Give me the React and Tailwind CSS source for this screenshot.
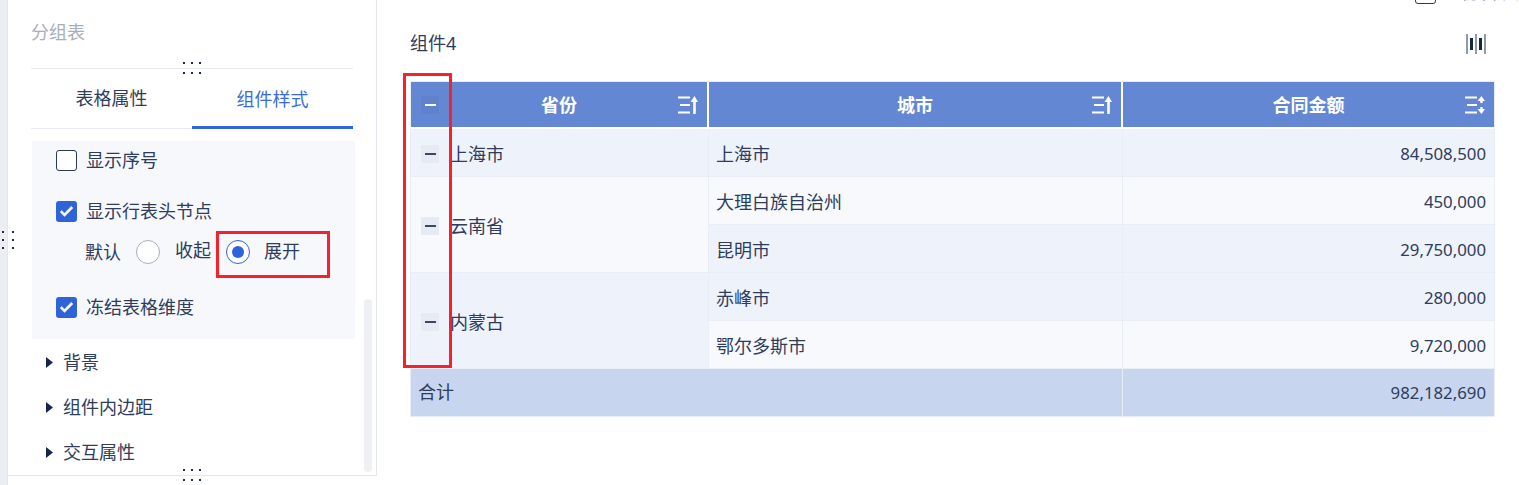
const font = { fontFamily: '"Noto Sans", "Noto Sans CJK SC", sans-serif' };

function Dots({ className }) {
  return (
    <div className={`absolute grid grid-cols-3 gap-x-[6px] gap-y-[8px] ${className}`}>
      {[0, 1, 2, 3, 4, 5].map((i) => (
        <span key={i} className="w-[2px] h-[2px] bg-[#1e2d4d]"></span>
      ))}
    </div>
  );
}

function Check({ checked, label }) {
  return (
    <div className="flex items-center gap-[9px] h-[20px] text-[18px] leading-[20px] text-[#2e3d5c]">
      {checked ? (
        <span className="w-[21px] h-[21px] rounded-[3px] bg-[#2f63d9] flex items-center justify-center">
          <svg width="15" height="12" viewBox="0 0 15 12" fill="none">
            <path d="M1.8 6.2 L5.6 10 L13.2 2" stroke="#fff" strokeWidth="2.6" />
          </svg>
        </span>
      ) : (
        <span className="w-[21px] h-[21px] rounded-[3px] border border-[#2b3a58] bg-white"></span>
      )}
      <span>{label}</span>
    </div>
  );
}

function Section({ label }) {
  return (
    <div className="flex items-center h-[45px] text-[18px] text-[#2e3d5c]">
      <svg width="7" height="11" viewBox="0 0 7 11" className="mr-[10px]">
        <path d="M0 0 L7 5.5 L0 11 Z" fill="#14264a" />
      </svg>
      <span>{label}</span>
    </div>
  );
}

function SortIcon({ both }) {
  return (
    <svg width="20" height="20" viewBox="0 0 20 20" fill="none" stroke="#fff" strokeWidth="2">
      <path d="M0 2.5 H12 M2 10 H12 M0 17.5 H12" />
      {both ? (
        <>
          <path d="M16.5 3 V8 M16.5 12 V17" strokeWidth="2.4" />
          <path d="M12.5 6 L16.5 1 L20 6 Z M12.5 14 L16.5 19 L20 14 Z" fill="#fff" strokeWidth="0" />
        </>
      ) : (
        <>
          <path d="M16.5 4 V19" strokeWidth="2.6" />
          <path d="M12.5 7 L16.5 1 L20 7 Z" fill="#fff" strokeWidth="0" />
        </>
      )}
    </svg>
  );
}

function Collapse({ light }) {
  return (
    <span className={`w-[18px] h-[18px] flex items-center justify-center shrink-0 ${light ? "bg-[#5e82cc]" : "bg-[#e6eaf2]"}`}>
      <span className={`w-[11px] h-[2px] ${light ? "bg-white" : "bg-[#3a4866]"}`}></span>
    </span>
  );
}

function HeaderCell({ title, both, left, borderRight }) {
  return (
    <div className={`h-[47px] bg-[#6387d3] border-b-2 border-white grid grid-cols-[1fr_auto_1fr] items-center text-white font-bold text-[18px] ${borderRight ? "border-r-2 border-r-white" : ""}`}>
      <div className="pl-[10px]">{left}</div>
      <div className="mt-[2px]">{title}</div>
      <div className="flex justify-end pr-[9px]">
        <SortIcon both={both} />
      </div>
    </div>
  );
}

function GroupCell({ name, bg, span }) {
  return (
    <div className={`${span} ${bg} border-b border-r border-[#e8edf6] flex items-center pl-[10px] pt-[2px] gap-[11px] text-[18px] text-[#2e3d5c]`}>
      <Collapse />
      <span className="mt-[2px]">{name}</span>
    </div>
  );
}

function CityCell({ name, bg }) {
  return (
    <div className={`h-[48px] ${bg} border-b border-r border-[#e8edf6] flex items-center pl-[7px] pt-[4px] text-[18px] text-[#2e3d5c]`}>
      {name}
    </div>
  );
}

function NumCell({ value, bg }) {
  return (
    <div className={`h-[48px] ${bg} border-b border-[#e8edf6] flex items-center justify-end pr-[8px] pt-[2px] text-[16.8px] text-[#2e3d5c]`}>
      {value}
    </div>
  );
}

export default function App() {
  return (
    <div style={font} className="relative w-[1519px] h-[485px] overflow-hidden bg-white flex">
      {/* left strip */}
      <div className="w-[8px] shrink-0 bg-[#eceef4] border-r border-[#e3e6ef]"></div>

      {/* settings panel */}
      <aside className="relative w-[369px] shrink-0 border-r border-[#e3e6ef] h-[476px] border-b pl-[23px]">
        <div className="w-[322px] h-[69px] pt-[20px] border-b border-[#e6e9f2] text-[18px] leading-[24px] text-[#a9aeb9]">分组表</div>
        <div className="w-[322px] h-[60px] flex text-[18px] border-b border-[#e6e9f2]">
          <div className="w-[161px] flex items-center justify-center text-[#2e3d5c]">表格属性</div>
          <div className="w-[161px] flex items-center justify-center text-[#3a6ddb] border-b-[3px] border-[#2f66de] h-[60px] pt-[3px]">组件样式</div>
        </div>
        <div className="ml-[1px] mt-[12px] w-[323px] h-[198px] bg-[#f7f8fc] pl-[24px] pt-[9px]">
          <Check label="显示序号" />
          <div className="mt-[31px]">
            <Check checked label="显示行表头节点" />
          </div>
          <div className="mt-[19px] ml-[29px] h-[24px] flex items-center text-[18px] text-[#2e3d5c]">
            <span>默认</span>
            <span className="ml-[15px] w-[24px] h-[24px] rounded-full border border-[#a9aeb9] bg-white"></span>
            <span className="ml-[15px] mb-[4px]">收起</span>
            <span className="ml-[15px] w-[24px] h-[24px] rounded-full border border-[#2f63d9] bg-white flex items-center justify-center">
              <span className="w-[12px] h-[12px] rounded-full bg-[#2f63d9]"></span>
            </span>
            <span className="ml-[14px] mb-[2px]">展开</span>
          </div>
          <div className="mt-[33px]">
            <Check checked label="冻结表格维度" />
          </div>
        </div>
        <div className="pl-[15px] pt-[1px]">
          <Section label="背景" />
          <Section label="组件内边距" />
          <Section label="交互属性" />
        </div>
        <div className="absolute left-[356px] top-[299px] w-[8px] h-[173px] rounded-[4px] bg-[#eef0f4]"></div>
      </aside>

      {/* main */}
      <main className="flex-1 pl-[33px] pr-[24px]">
        <div className="h-[81px] pt-[31px] pr-[9px] flex justify-between items-start text-[18px] leading-[24px] text-[#2e3d5c]">
          <span>组件4</span>
          <svg width="20" height="20" viewBox="0 0 20 20" className="mt-[3px]">
            <path d="M1 0 V20 M10 0 V20 M19 0 V20" stroke="#4a5872" strokeWidth="1.2" />
            <path d="M4 4 H7 V16 H4 Z M13 4 H16 V16 H13 Z" fill="#14264a" />
          </svg>
        </div>
        <div className="w-[1085px] border border-[#e8edf6] grid grid-cols-[298px_414px_371px]">
          <HeaderCell title="省份" borderRight left={<Collapse light />} />
          <HeaderCell title="城市" borderRight />
          <HeaderCell title="合同金额" both />

          <GroupCell name="上海市" bg="bg-[#eef2fa]" span="" />
          <CityCell name="上海市" bg="bg-[#eef2fa]" />
          <NumCell value="84,508,500" bg="bg-[#eef2fa]" />

          <GroupCell name="云南省" bg="bg-[#f7f9fd]" span="row-span-2" />
          <CityCell name="大理白族自治州" bg="bg-[#f7f9fd]" />
          <NumCell value="450,000" bg="bg-[#f7f9fd]" />
          <CityCell name="昆明市" bg="bg-[#eef2fa]" />
          <NumCell value="29,750,000" bg="bg-[#eef2fa]" />

          <GroupCell name="内蒙古" bg="bg-[#eef2fa]" span="row-span-2" />
          <CityCell name="赤峰市" bg="bg-[#eef2fa]" />
          <NumCell value="280,000" bg="bg-[#eef2fa]" />
          <CityCell name="鄂尔多斯市" bg="bg-[#f7f9fd]" />
          <NumCell value="9,720,000" bg="bg-[#f7f9fd]" />

          <div className="col-span-2 h-[47px] bg-[#c8d5ee] border-r border-[#e8edf6] flex items-center pl-[7px] text-[18px] text-[#2e3d5c]">合计</div>
          <div className="h-[47px] bg-[#c8d5ee] flex items-center justify-end pr-[8px] text-[16.8px] text-[#2e3d5c]">982,182,690</div>
        </div>
      </main>

      {/* overlays */}
      <Dots className="left-[183px] top-[62px]" />
      <Dots className="left-[183px] top-[469px]" />
      <div className="absolute left-[2px] top-[231px] grid grid-cols-2 gap-x-[8px] gap-y-[6px]">
        {[0, 1, 2, 3, 4, 5].map((i) => (
          <span key={i} className="w-[2px] h-[2px] bg-[#1e2d4d]"></span>
        ))}
      </div>
      <div className="absolute left-[403px] top-[73px] w-[49px] h-[295px] border-[3px] border-[#f5222d]"></div>
      <div className="absolute left-[216px] top-[231px] w-[114px] h-[47px] border-[3px] border-[#f5222d]"></div>
      <div className="absolute left-[1415px] top-[-17px] flex items-center gap-[14px] text-[18px] leading-[21px] whitespace-nowrap text-[#2e3d5c]">
        <span className="w-[21px] h-[21px] rounded-[3px] border border-[#2b3a58] bg-white"></span>
        <span className="-mt-[3px]">- 初次规范</span>
      </div>
    </div>
  );
}
